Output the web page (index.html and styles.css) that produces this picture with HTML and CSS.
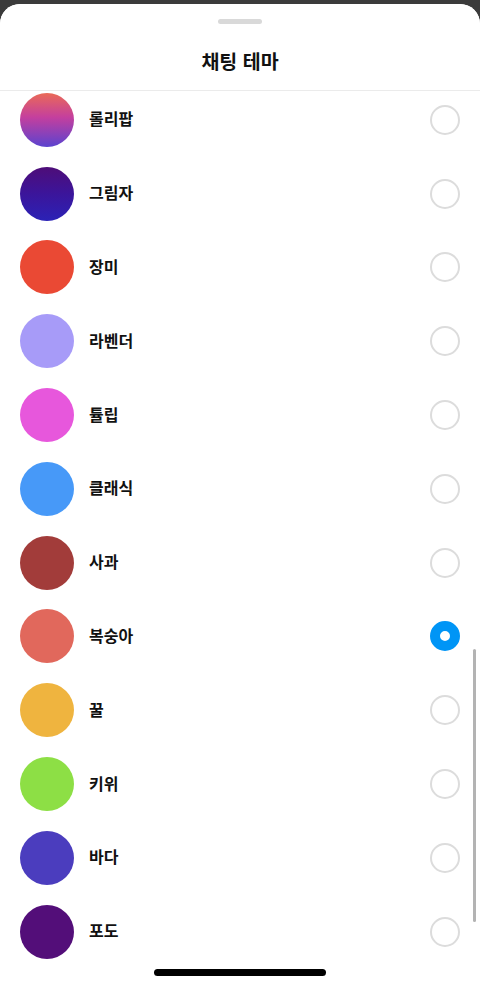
FILE: index.html
```html
<!DOCTYPE html>
<html lang="ko">
<head>
<meta charset="utf-8">
<title>채팅 테마</title>
<link rel="stylesheet" href="styles.css">
</head>
<body>
<div class="sheet">
  <header class="header">
    <div class="handle"></div>
    <h1 class="title">채팅 테마</h1>
  </header>
  <ul class="list">
    <li class="row"><span class="swatch sw-lollipop"></span><span class="label">롤리팝</span><span class="radio"></span></li>
    <li class="row"><span class="swatch sw-shadow"></span><span class="label">그림자</span><span class="radio"></span></li>
    <li class="row"><span class="swatch sw-rose"></span><span class="label">장미</span><span class="radio"></span></li>
    <li class="row"><span class="swatch sw-lavender"></span><span class="label">라벤더</span><span class="radio"></span></li>
    <li class="row"><span class="swatch sw-tulip"></span><span class="label">튤립</span><span class="radio"></span></li>
    <li class="row"><span class="swatch sw-classic"></span><span class="label">클래식</span><span class="radio"></span></li>
    <li class="row"><span class="swatch sw-apple"></span><span class="label">사과</span><span class="radio"></span></li>
    <li class="row"><span class="swatch sw-peach"></span><span class="label">복숭아</span><span class="radio radio-on"></span></li>
    <li class="row"><span class="swatch sw-honey"></span><span class="label">꿀</span><span class="radio"></span></li>
    <li class="row"><span class="swatch sw-kiwi"></span><span class="label">키위</span><span class="radio"></span></li>
    <li class="row"><span class="swatch sw-ocean"></span><span class="label">바다</span><span class="radio"></span></li>
    <li class="row"><span class="swatch sw-grape"></span><span class="label">포도</span><span class="radio"></span></li>
  </ul>
  <div class="scrollbar"></div>
  <div class="home-indicator"></div>
</div>
</body>
</html>
```

FILE: styles.css
```css
html, body {
  margin: 0;
  padding: 0;
}
body {
  background: #3b3b3b;
  font-family: "Noto Sans CJK KR", "Noto Sans", sans-serif;
  color: #111;
}
.sheet {
  position: relative;
  margin-top: 4px;
  height: 981px;
  background: #fff;
  border-radius: 20px 20px 0 0;
  overflow: hidden;
}
.header {
  position: relative;
  z-index: 1;
  background: #fff;
  padding-top: 15px;
  padding-bottom: 8px;
  border-bottom: 1px solid #ebebeb;
}
.handle {
  width: 44px;
  height: 5px;
  margin: 0 auto;
  border-radius: 3px;
  background: #d9d9d9;
}
.title {
  margin: 18px 0 0;
  height: 40px;
  line-height: 38px;
  font-size: 19.5px;
  font-weight: 700;
  text-align: center;
  color: #111;
}
.list {
  list-style: none;
  margin: -8px 0 0;
  padding: 0;
}
.row {
  display: flex;
  align-items: center;
  height: 73.8px;
  padding: 0 20px;
}
.swatch {
  flex: none;
  width: 54px;
  height: 54px;
  border-radius: 50%;
}
.label {
  flex: 1;
  margin-left: 15px;
  margin-bottom: 3px;
  font-size: 16px;
  line-height: 20px;
  font-weight: 600;
  color: #111;
}
.radio {
  flex: none;
  box-sizing: border-box;
  width: 30px;
  height: 30px;
  border-radius: 50%;
  border: 2px solid #dcdcdc;
}
.radio-on {
  border: 10px solid #0095f6;
}
.sw-lollipop { background: linear-gradient(180deg, #ea6a57 0%, #c43f9e 45%, #5b43cf 100%); }
.sw-shadow { background: linear-gradient(180deg, #4e0d78 0%, #3b159b 50%, #2b22b6 100%); }
.sw-rose { background: #ea4934; }
.sw-lavender { background: #a79bf8; }
.sw-tulip { background: #e757dc; }
.sw-classic { background: #4799f8; }
.sw-apple { background: #a23c3a; }
.sw-peach { background: #e1685c; }
.sw-honey { background: #efb43f; }
.sw-kiwi { background: #8ddf45; }
.sw-ocean { background: #4b3dbe; }
.sw-grape { background: #530e79; }
.scrollbar {
  position: absolute;
  right: 4px;
  top: 645px;
  width: 3.5px;
  height: 273px;
  border-radius: 2px;
  background: #b3b3b3;
}
.home-indicator {
  position: absolute;
  left: 154px;
  bottom: 9px;
  width: 172px;
  height: 7px;
  border-radius: 4px;
  background: #000;
}
```
